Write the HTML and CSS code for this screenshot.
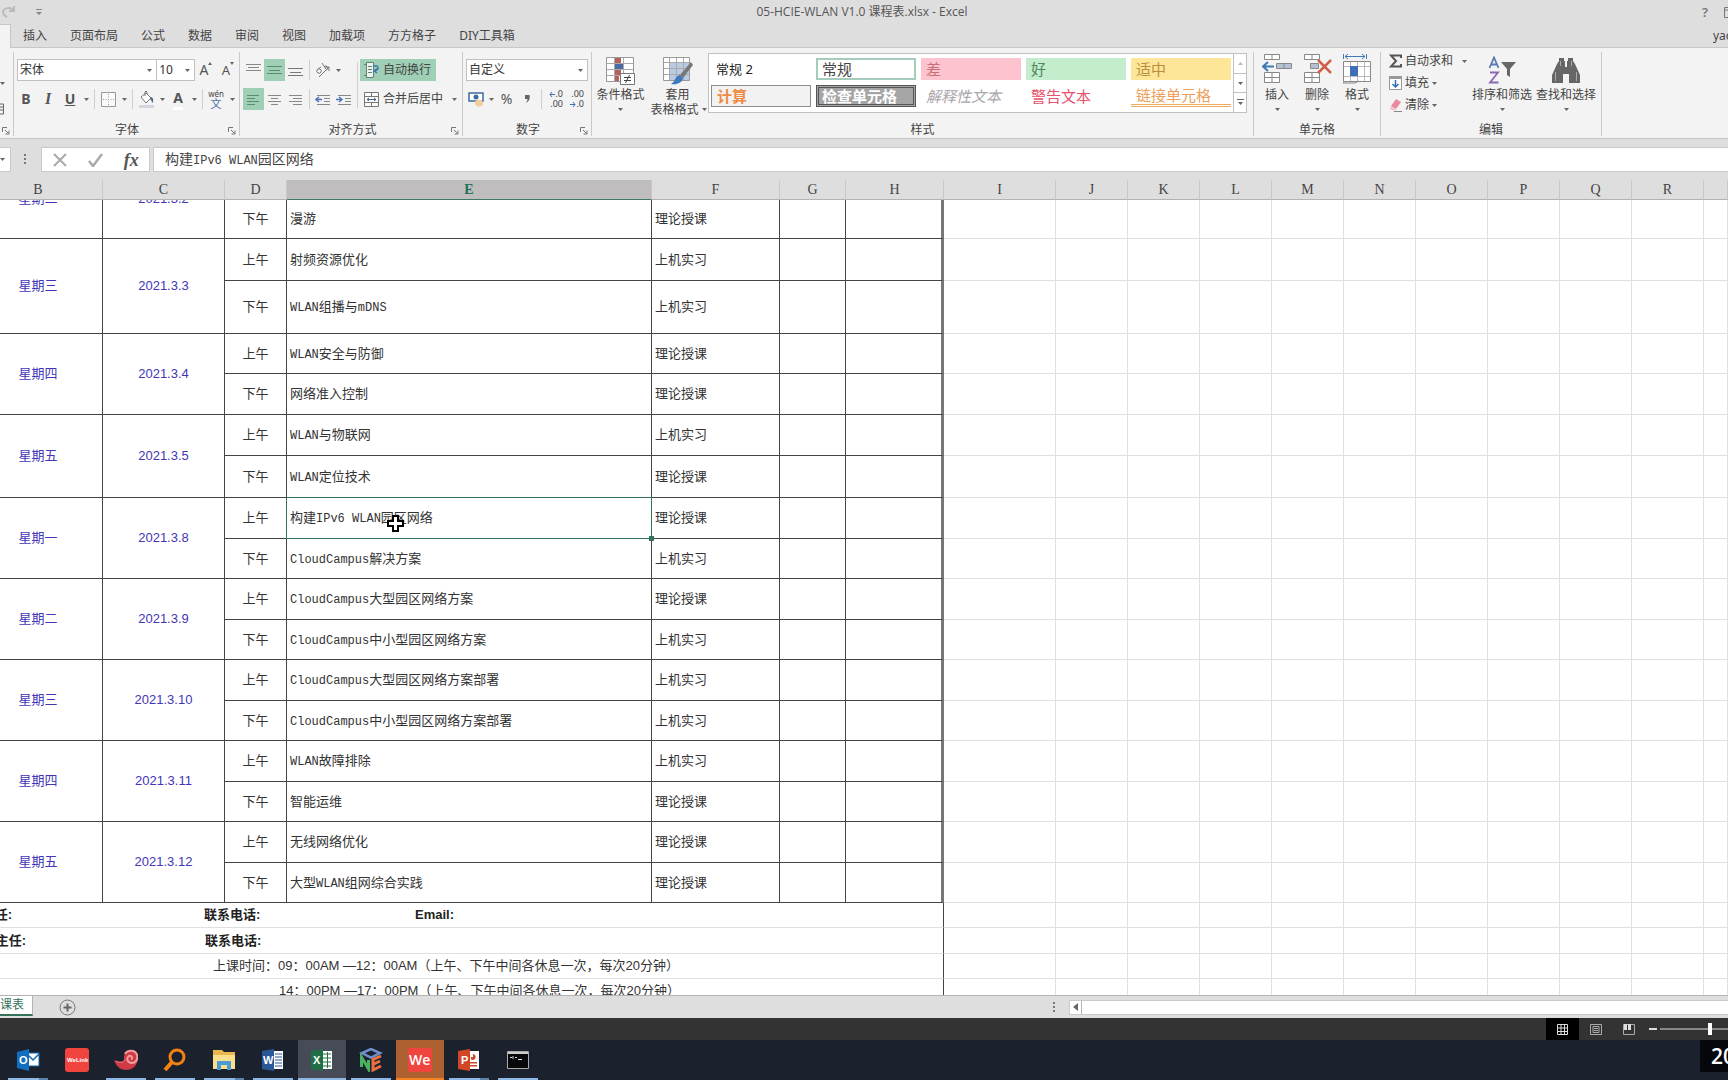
FILE: index.html
```html
<!DOCTYPE html>
<html lang="zh-CN">
<head>
<meta charset="utf-8">
<title>05-HCIE-WLAN V1.0 课程表.xlsx - Excel</title>
<link rel="stylesheet" href="styles.css">
</head>
<body>
<svg class="defs" aria-hidden="true">
  <symbol id="caret" viewBox="0 0 7 4"><path d="M0 0h7L3.500 4z"/></symbol>
  <symbol id="launch" viewBox="0 0 8 8"><path d="M.5 5V.5H5M3 3l3.500 3.500M7 3.500V7H3.500" fill="none" stroke="#777"/></symbol>
</svg>

<header class="titlebar">
  <div class="quick">
    <svg width="16" height="14" viewBox="0 0 16 14"><path d="M14 1v5H9M14 6C11 2 4 2 3 7c0 3 2 4 4 5" fill="none" stroke="#bdbabb" stroke-width="2"/></svg>
    <svg class="more" width="6" height="6" viewBox="0 0 6 6"><path d="M0 0h6v1H0zM0 3h6L3 6z" fill="#8a8788"/></svg>
  </div>
  <h1>05-HCIE-WLAN V1.0 课程表.xlsx - Excel</h1>
  <div class="winbtns"><span>?</span><svg width="4" height="11"><path d="M5 .5H.5v10H5M1 3h4" fill="none" stroke="#777"/></svg></div>
</header>

<nav class="tabs">
  <span class="tab-active"></span>
  <a href="#">插入</a><a href="#">页面布局</a><a href="#">公式</a><a href="#">数据</a><a href="#">审阅</a><a href="#">视图</a><a href="#">加载项</a><a href="#">方方格子</a><a href="#">DIY工具箱</a>
  <span class="user">yao</span>
</nav>

<section class="ribbon">
  <div class="group g-clip">
    <div class="clip-body">
      <svg class="caret" width="5" height="3"><use href="#caret"/></svg>
      <svg width="5" height="12"><path d="M0 1h3.500v10H0M0 4h3M0 7h3" fill="none" stroke="#666"/></svg>
    </div>
    <svg class="launch" width="8" height="8"><use href="#launch"/></svg>
  </div>

  <div class="group g-font">
    <div class="body">
      <div class="row fields">
        <span class="field w-font"><select aria-label="字体"><option>宋体</option></select><svg class="caret" width="5" height="3"><use href="#caret"/></svg></span>
        <span class="field w-size"><select aria-label="字号"><option>10</option></select><svg class="caret" width="5" height="3"><use href="#caret"/></svg></span>
        <button class="ib grow" aria-label="增大字号"><span class="letter">A</span><svg width="4" height="3"><path d="M0 3h4L2 0z"/></svg></button>
        <button class="ib grow" aria-label="减小字号"><span class="letter small">A</span><svg width="4" height="3"><path d="M0 0h4L2 3z"/></svg></button>
      </div>
      <div class="row">
        <button class="ib"><b class="letter">B</b></button>
        <button class="ib"><b class="letter serif"><i>I</i></b></button>
        <button class="ib"><b class="letter"><u>U</u></b></button>
        <button class="cb" aria-label="下划线选项"><svg class="caret" width="5" height="3"><use href="#caret"/></svg></button>
        <span class="sep"></span>
        <button class="ib" aria-label="边框"><svg width="15" height="15"><path d="M.5 .5h14v14H.5z" fill="#fafafa" stroke="#999"/><path d="M7.500 2v11M2 7.500h11" stroke="#999" stroke-dasharray="1 1.500"/></svg></button>
        <button class="cb" aria-label="边框选项"><svg class="caret" width="5" height="3"><use href="#caret"/></svg></button>
        <span class="sep"></span>
        <button class="ib" aria-label="填充颜色"><svg width="17" height="18"><path d="M3 7l5-4 5 5-5 5z" fill="#fff" stroke="#777"/><path d="M7 6V2q1-2 2 0v2" fill="none" stroke="#777"/><path d="M13 7c3 1 2 3 2 6-2-1-1-3-3-4z" fill="#56657f"/><path d="M1 15h15v3H1z" fill="#d4d5de"/></svg></button>
        <button class="cb" aria-label="填充选项"><svg class="caret" width="5" height="3"><use href="#caret"/></svg></button>
        <button class="ib" aria-label="字体颜色"><b class="letter under">A</b></button>
        <button class="cb" aria-label="字体颜色选项"><svg class="caret" width="5" height="3"><use href="#caret"/></svg></button>
        <span class="sep"></span>
        <button class="ib pinyin" aria-label="拼音"><span>wén</span><span class="zh">文</span></button>
        <button class="cb" aria-label="拼音选项"><svg class="caret" width="5" height="3"><use href="#caret"/></svg></button>
      </div>
    </div>
    <div class="label">字体</div><svg class="launch" width="8" height="8"><use href="#launch"/></svg>
  </div>

  <div class="group g-align">
    <div class="body split">
      <div class="left">
        <div class="row">
          <button class="ib" aria-label="顶端对齐"><svg width="15" height="18"><path d="M0 3.500h15M2 6.500h11M0 9.500h15" stroke="#888"/></svg></button>
          <button class="ib on" aria-label="垂直居中"><svg width="15" height="14"><path d="M0 3.500h15M2 7.500h11M0 10.500h15" stroke="#5d8a75"/></svg></button>
          <button class="ib" aria-label="底端对齐"><svg width="15" height="14"><path d="M0 5.500h15M2 9.500h11M0 12.500h15" stroke="#777"/></svg></button>
          <span class="sep"></span>
          <button class="ib" aria-label="方向"><svg width="16" height="16"><path d="M2 8a2 2 0 1 1 4 2 2 2 0 1 1-4-2l4-3M7 1l4 6M9 5a2 2 0 1 1 2 3M4 15L14 5M14 9V5h-4" fill="none" stroke="#777"/></svg></button>
          <button class="cb" aria-label="方向选项"><svg class="caret" width="5" height="3"><use href="#caret"/></svg></button>
        </div>
        <div class="row">
          <button class="ib on" aria-label="左对齐"><svg width="13" height="13"><path d="M0 2.500h12M0 5.500h8M0 8.500h12M0 11.500h8" stroke="#5d8a75"/></svg></button>
          <button class="ib" aria-label="居中"><svg width="13" height="13"><path d="M0 2.500h13M3 5.500h7M0 8.500h13M3 11.500h7" stroke="#888"/></svg></button>
          <button class="ib" aria-label="右对齐"><svg width="13" height="13"><path d="M0 2.500h13M4 5.500h9M0 8.500h13M4 11.500h9" stroke="#888"/></svg></button>
          <span class="sep"></span>
          <button class="ib" aria-label="减少缩进"><svg width="15" height="13"><path d="M2 2.500h13M9 5.500h6M9 8.500h6M2 11.500h13" stroke="#888"/><path d="M7 6.500H1M4 4L1 6.500 4 9" stroke="#4d74b5" stroke-width="1.500" fill="none"/></svg></button>
          <button class="ib" aria-label="增加缩进"><svg width="15" height="13"><path d="M2 2.500h13M9 5.500h6M9 8.500h6M2 11.500h13" stroke="#888"/><path d="M0 6.500h6M3 4l3 2.500L3 9" stroke="#4d74b5" stroke-width="1.500" fill="none"/></svg></button>
        </div>
      </div>
      <span class="sep tall"></span>
      <div class="right">
        <button class="tb on"><svg width="17" height="18"><path d="M3.500 1.500h7v15h-7zM5 5.500h4M5 8.500h4M5 11.500h4M1 14.500h2M1 3.500h2" fill="#eaf4ee" stroke="#6b7d75"/><path d="M10 5h4q3 3-2 5M14 7.500L11 10l3 2" fill="none" stroke="#3f78ae" stroke-width="1.500"/></svg>自动换行</button>
        <button class="tb"><svg width="17" height="17"><path d="M1.500 1.500h14v14h-14zM1.500 5.500h14M1.500 11.500h14M8.500 1v4M8.500 12v4" fill="#fafafa" stroke="#777"/><path d="M4 8.500h9M6 7L4 8.500 6 10M11 7l2 1.500L11 10" fill="none" stroke="#49698f"/></svg>合并后居中<svg class="caret far" width="5" height="3"><use href="#caret"/></svg></button>
      </div>
    </div>
    <div class="label">对齐方式</div><svg class="launch" width="8" height="8"><use href="#launch"/></svg>
  </div>

  <div class="group g-number">
    <div class="body">
      <div class="row fields">
        <span class="field w-num"><select aria-label="数字格式"><option>自定义</option></select><svg class="caret" width="5" height="3"><use href="#caret"/></svg></span>
      </div>
      <div class="row">
        <button class="ib" aria-label="会计格式"><svg width="16" height="16"><path d="M1 2h14v8H1z" fill="#fff" stroke="#3e6aa5" stroke-width="1.500"/><circle cx="8" cy="6" r="2.500" fill="#3e6aa5"/><ellipse cx="11" cy="12" rx="4" ry="3.500" fill="#f1cf9d"/></svg></button>
        <button class="cb" aria-label="会计格式选项"><svg class="caret" width="5" height="3"><use href="#caret"/></svg></button>
        <button class="ib"><span class="letter pct">%</span></button>
        <button class="ib" aria-label="千位分隔"><svg width="7" height="10"><path d="M1 1h4.500c1 4-1 7-4 8 1-1 2-2 2-4H1z" fill="#666"/></svg></button>
        <span class="sep"></span>
        <button class="ib dec" aria-label="增加小数位数"><span class="up"><svg width="6" height="5"><path d="M6 2.500H1M3 0L1 2.500 3 5" fill="none" stroke="#3f6fb5"/></svg>.0</span><span>.00</span></button>
        <button class="ib dec" aria-label="减少小数位数"><span>.00</span><span class="up"><svg width="6" height="5"><path d="M0 2.500h5M3 0l2 2.500L3 5" fill="none" stroke="#3f6fb5"/></svg>.0</span></button>
      </div>
    </div>
    <div class="label">数字</div><svg class="launch" width="8" height="8"><use href="#launch"/></svg>
  </div>

  <div class="group g-style">
    <div class="body split">
      <button class="big">
        <svg width="29" height="29"><path d="M.5 1.500h27v24H.5z" fill="#fff" stroke="#999"/><path d="M1 7.500h26M1 13.500h26M1 19.500h26M8.500 2v23M17.500 2v23" stroke="#aaa"/><path d="M9 2h6v5H9zM9 14h6v5H9zM9 20h4v5H9z" fill="#b5605a"/><path d="M9 8h8v5H9z" fill="#4b6ca5"/><path d="M14.500 17.500h14v11h-14z" fill="#fff" stroke="#777"/><path d="M18 21.500h7M18 24.500h7M23.500 19L19.500 27" stroke="#444"/></svg>
        <span>条件格式</span><svg class="caret" width="5" height="3"><use href="#caret"/></svg>
      </button>
      <button class="big">
        <svg width="31" height="29"><path d="M1.500 1.500h26v23h-26z" fill="#fff" stroke="#999"/><path d="M8 7h19v17H8z" fill="#b9cae2"/><path d="M2 6.500h25M2 12.500h25M2 18.500h25M7.500 2v22M14.500 2v22M21.500 2v22" stroke="#aaa"/><path d="M29 6L31 9 21 22l-3-3z" fill="#777"/><path d="M18 19l3 3c-1 5-6 7-12 6 4-2 4-8 9-9z" fill="#3f78bb"/></svg>
        <span>套用</span><span class="line2">表格格式<svg class="caret" width="5" height="3"><use href="#caret"/></svg></span>
      </button>
      <div class="gallery">
        <div class="swatches">
          <button class="sw sw-n2">常规 2</button><button class="sw sw-normal">常规</button><button class="sw sw-bad">差</button><button class="sw sw-good">好</button><button class="sw sw-mid">适中</button>
          <button class="sw sw-calc">计算</button><button class="sw sw-check">检查单元格</button><button class="sw sw-note">解释性文本</button><button class="sw sw-warn">警告文本</button><button class="sw sw-link">链接单元格</button>
        </div>
        <div class="steps">
          <button aria-label="上一行"><svg width="5" height="3"><path d="M0 3h5L2.500 0z" fill="#bbb"/></svg></button>
          <button aria-label="下一行"><svg class="caret" width="5" height="3"><use href="#caret"/></svg></button>
          <button aria-label="更多"><svg width="7" height="7"><path d="M0 0h7v1H0zM1 3h5L3.500 6z" fill="#666"/></svg></button>
        </div>
      </div>
    </div>
    <div class="label">样式</div>
  </div>

  <div class="group g-cells">
    <div class="body split">
      <button class="big mid">
        <svg width="30" height="30"><path d="M2.500 .5h15v5h-15zM10 1v4M2.500 18.500h15v10h-15zM3 23.500h14M10 19v9" fill="#fff" stroke="#888"/><path d="M14.500 9.500h15v5h-15zM22 10v4" fill="#b4c0d4" stroke="#888"/><path d="M12 12.500H2M6 8l-5 4.500L6 17" fill="none" stroke="#3f78b5" stroke-width="2"/></svg>
        <span>插入</span><svg class="caret" width="5" height="3"><use href="#caret"/></svg>
      </button>
      <button class="big mid">
        <svg width="30" height="30"><path d="M2.500 .5h15v5h-15zM10 1v4M2.500 18.500h15v10h-15zM3 23.500h14M10 19v9" fill="#fff" stroke="#888"/><path d="M8.500 9.500h8v5h-8z" fill="#b4c0d4" stroke="#888"/><path d="M16 6l13 13M29 6L16 19" stroke="#cf5f4a" stroke-width="2.500"/></svg>
        <span>删除</span><svg class="caret" width="5" height="3"><use href="#caret"/></svg>
      </button>
      <button class="big mid">
        <svg width="30" height="30"><path d="M3 2.500h20M6 0L3 2.500 6 5M20 0l3 2.500L20 5M1.500 0v5M24.500 0v5" fill="none" stroke="#3f78b5"/><path d="M1.500 7.500h27v20h-27z" fill="#fff" stroke="#888"/><path d="M2 12.500h26M2 22.500h26M8.500 8v19M15.500 8v19M22.500 8v19" stroke="#bbb"/><path d="M8 12h8v10H8z" fill="#3f6fb5"/><path d="M3 27l-2 2h12l4-2" fill="none" stroke="#888"/></svg>
        <span>格式</span><svg class="caret" width="5" height="3"><use href="#caret"/></svg>
      </button>
    </div>
    <div class="label">单元格</div>
  </div>

  <div class="group g-edit">
    <div class="body split">
      <div class="stack">
        <button class="tb"><svg width="13" height="14"><path d="M12 4V1.500H2L7 7l-5 5.500h10V10" fill="none" stroke="#555" stroke-width="2"/></svg>自动求和<svg class="caret far" width="5" height="3"><use href="#caret"/></svg></button>
        <button class="tb"><svg width="13" height="14"><path d="M.5 .5h12v13H.5z" fill="#fff" stroke="#999"/><path d="M0 0h13v3H0z" fill="#999"/><path d="M6.500 4v7M3.500 8l3 3 3-3" fill="none" stroke="#2f6fb0" stroke-width="1.500"/></svg>填充<svg class="caret" width="5" height="3"><use href="#caret"/></svg></button>
        <button class="tb"><svg width="13" height="14"><path d="M7 1l5 3-5 7-5-3z" fill="#e8899f"/><path d="M2 8l5 3-2 2-4-2z" fill="#f3c3cd"/><path d="M5 13.500h8" stroke="#888"/></svg>清除<svg class="caret" width="5" height="3"><use href="#caret"/></svg></button>
      </div>
      <button class="big wide">
        <svg width="28" height="28"><path d="M1.500 12L6 1.500 10.500 12M3 8.500h6" fill="none" stroke="#5b7bb4" stroke-width="1.800"/><path d="M2 16.500h8L2 26.500h8.500" fill="none" stroke="#8a68ad" stroke-width="1.800"/><path d="M13 6h15l-6 7v8l-3-2v-6z" fill="#666"/></svg>
        <span>排序和筛选</span><svg class="caret" width="5" height="3"><use href="#caret"/></svg>
      </button>
      <button class="big wide">
        <svg width="28" height="28"><path d="M7 2h5v3h1v6h2V5h1V2h5v3l2 3 5 11v8H17v-9h-6v9H0v-8L5 8l2-3z" fill="#666"/><path d="M3.500 16v9M24.500 16v9M8.500 5v5M19.500 5v5" stroke="#aaa"/></svg>
        <span>查找和选择</span><svg class="caret" width="5" height="3"><use href="#caret"/></svg>
      </button>
    </div>
    <div class="label">编辑</div>
  </div>
</section>

<section class="formula">
  <button class="namebox" aria-label="名称框"><svg class="caret" width="5" height="3"><use href="#caret"/></svg></button>
  <span class="grip"></span>
  <div class="fbtns">
    <button aria-label="取消"><svg width="14" height="14"><path d="M1 1l12 12M13 1L1 13" stroke="#aaa" stroke-width="2"/></svg></button>
    <button aria-label="输入"><svg width="15" height="14"><path d="M1 8l4 5L14 1" fill="none" stroke="#aaa" stroke-width="2.500"/></svg></button>
    <button class="fx">fx</button>
  </div>
  <div class="fval" role="textbox" aria-label="编辑栏">构建<span class="lat">IPv6 WLAN</span>园区网络</div>
</section>

<div class="headwrap"><table class="sheet head" aria-label="列标题"></table></div>
<main class="viewport"><table class="sheet cells" aria-label="课程表"></table></main>

<div class="sheetbar">
  <a class="sheettab" href="#">课表</a>
  <button class="add" aria-label="新工作表"><svg width="17" height="17"><circle cx="8.500" cy="8.500" r="7.500" fill="none" stroke="#777"/><path d="M8.500 4.500v8M4.500 8.500h8" stroke="#666" stroke-width="2"/></svg></button>
  <span class="grip"></span>
  <div class="hscroll"><button aria-label="向左滚动"><svg width="5" height="8"><path d="M5 0v8L0 4z" fill="#666"/></svg></button><span class="thumb"></span></div>
</div>

<footer class="status">
  <button class="view on" aria-label="普通"><svg width="11" height="11"><path d="M.5 .5h10v10H.5zM4 0v11M7.500 0v11M0 4h11M0 7.500h11" fill="none" stroke="#ddd"/></svg></button>
  <button class="view" aria-label="页面布局视图"><svg width="12" height="11"><path d="M.5 .5h11v10H.5zM3 2.500h6v6H3zM4 4.500h4M4 6.500h4" fill="none" stroke="#aaa"/></svg></button>
  <button class="view" aria-label="分页预览"><svg width="12" height="11"><path d="M.5 .5h11v10H.5z" fill="none" stroke="#aaa"/><path d="M1 0h3v6H1zM5 0h3v6H5z" fill="#ddd"/></svg></button>
  <span class="minus"></span>
  <input class="zoom" type="range" aria-label="缩放" value="50">
</footer>

<div class="taskbar">
  <button class="app two" aria-label="Outlook"><svg width="24" height="24"><path d="M11 5h12v13H11z" fill="#fff" stroke="#0d6ab5"/><path d="M12 7l5 5 6-6" fill="none" stroke="#0d6ab5" stroke-width="1.500"/><path d="M1 4l12-3v22L1 20z" fill="#0f6fbe"/><text x="3" y="16" class="mark">O</text></svg></button>
  <button class="app none" aria-label="WeLink"><svg width="24" height="24"><rect width="24" height="24" rx="3" fill="#f0453f"/><text x="2" y="14" class="tiny">WeLink</text></svg></button>
  <button class="app" aria-label="eSight"><svg width="24" height="22"><path d="M0 11c4 2 8 2 10 0-1-6 3-10 8-10 4 0 6 3 6 7 0 8-5 13-12 13C6 21 2 17 0 11z" fill="#cf3a46"/><path d="M11 5c2-4 10-5 12 1 1 4-1 8-5 8-5 0-6-5-3-7 3-1 4 3 2 3" fill="none" stroke="#f0a09c" stroke-width="2"/><path d="M2 12c5 3 9 1 9-2" fill="none" stroke="#ea7c7c"/></svg></button>
  <button class="app" aria-label="Everything"><svg width="24" height="24"><circle cx="14" cy="9" r="7" fill="none" stroke="#f28211" stroke-width="3"/><path d="M9 14l-7 8" stroke="#f28211" stroke-width="4"/></svg></button>
  <button class="app two" aria-label="文件资源管理器"><svg width="24" height="24"><path d="M1 2h9l2 2h11v17H1z" fill="#e9b84c"/><path d="M1 7h22v14H1z" fill="#fbe08c"/><path d="M5 13h14v9h-4v-5H9v5H5z" fill="#4a9ad8"/></svg></button>
  <button class="app" aria-label="Word"><svg width="24" height="24"><path d="M12 3h10v18H12z" fill="#fff"/><path d="M14 6h7M14 9h7M14 12h7M14 15h7M14 18h7" stroke="#2b579a"/><path d="M1 3l12-2v22L1 21z" fill="#2b579a"/><text x="2" y="16" class="mark">W</text></svg></button>
  <button class="app active" aria-label="Excel"><svg width="24" height="24"><path d="M12 3h10v18H12z" fill="#fff"/><path d="M13 6h8M13 10h8M13 14h8M13 18h8M17.500 4v16" stroke="#1f7145"/><path d="M1 3l12-2v22L1 21z" fill="#1f7145"/><text x="3" y="16" class="mark">X</text></svg></button>
  <button class="app" aria-label="eNSP"><svg width="24" height="24"><path d="M12 1l9 4-9 4.500L3 5z" fill="none" stroke="#6f8fce" stroke-width="2.500"/><path d="M2.500 19V9l7 12V12" fill="none" stroke="#49b261" stroke-width="3"/><path d="M22 8l-8 3.500V22l8-4M14 16.500l7-3.500" fill="none" stroke="#ea7040" stroke-width="3"/></svg></button>
  <button class="app orange" aria-label="WeLink 会议"><svg width="24" height="24"><rect width="24" height="24" rx="2" fill="#f0453f"/><text x="1" y="17" class="we">We</text></svg></button>
  <button class="app two" aria-label="PowerPoint"><svg width="24" height="24"><path d="M12 3h10v18H12z" fill="#fff"/><path d="M13 14h7v1.500h-7zM13 17h7v1.500h-7z" fill="#d04727"/><path d="M16 6a3 3 0 1 1-2 5.500V9h2z" fill="#d04727"/><path d="M1 3l12-2v22L1 21z" fill="#d04727"/><text x="4" y="16" class="mark">P</text></svg></button>
  <button class="app" aria-label="命令提示符"><svg width="22" height="18"><path d="M.5 .5h21v17H.5z" fill="#08090b" stroke="#aaa"/><path d="M1 1h20v2H1z" fill="#ccc"/><path d="M3 6.500h2M6 5v3M8 6.500h2M11 8.500h4" stroke="#ddd"/></svg></button>
  <div class="clock">20</div>
</div>
<script src="sheet.js"></script>
</body>
</html>
```

FILE: styles.css
```css
* { box-sizing: border-box; }
html, body { height: 100%; }
body {
  margin: 0;
  display: flex;
  flex-direction: column;
  overflow: hidden;
  background: #dfdedf;
  color: #444;
  font: 12px/16px "Noto Sans", "Noto Sans CJK SC", sans-serif;
}
button, select { font: inherit; color: inherit; border: 0; padding: 0; margin: 0; background: none; }
button { display: flex; align-items: center; justify-content: center; }
a { color: inherit; text-decoration: none; }
svg { display: block; flex: none; }
.defs { position: absolute; width: 0; height: 0; }
.caret { fill: #666; }

.titlebar { display: flex; align-items: center; height: 24px; flex: none; }
.quick { display: flex; align-items: center; gap: 20px; width: 200px; }
.titlebar h1 { flex: 1; margin: 0; padding-right: 4px; text-align: center; font: 400 12px/16px "Open Sans", "Noto Sans CJK SC", sans-serif; color: #555; }
.winbtns { display: flex; align-items: center; justify-content: flex-end; gap: 16px; width: 200px; font-size: 13px; font-weight: 600; color: #777; }

.tabs { display: flex; align-items: center; gap: 23px; height: 24px; flex: none; border-bottom: 1px solid #c8c7c8; white-space: nowrap; }
.tab-active { width: 11px; height: 24px; margin-right: -11px; background: #f3f3f3; border: 1px solid #c8c7c8; border-width: 1px 1px 0 0; }
.user { margin-left: auto; width: 15px; overflow: hidden; }

.ribbon { display: flex; height: 91px; flex: none; padding-top: 4px; background: #f3f3f3; border-bottom: 1px solid #c8c7c8; white-space: nowrap; }
.group { position: relative; flex: none; display: flex; flex-direction: column; height: 84px; border-right: 1px solid #c9c9c9; }
.g-clip { width: 14px; }
.clip-body { padding-top: 30px; display: grid; gap: 18px; }
.g-font { width: 226px; padding-left: 1px; }
.g-align { width: 223px; padding-left: 3px; }
.g-number { width: 129px; padding-left: 2px; }
.g-style { width: 662px; }
.g-cells { width: 127px; }
.g-edit { width: 221px; }
.label { height: 16px; margin-bottom: -2px; text-align: center; }
.launch { position: absolute; right: 3px; bottom: 1px; }
.body { flex: 1; display: flex; flex-direction: column; gap: 7px; padding-top: 7px; }
.body.split { flex-direction: row; gap: 0; }
.row { display: flex; align-items: center; height: 22px; }
.left { display: flex; flex-direction: column; gap: 7px; width: 112px; }
.left .ib { width: 21px; }
.right { display: flex; flex-direction: column; align-items: flex-start; gap: 7px; }
.ib { width: 22px; height: 22px; flex: none; }
.g-number .ib { width: 21px; }
.cb { width: 10px; height: 22px; flex: none; }
.on { background: #9fcfb5; }
.sep { width: 1px; height: 20px; margin: 0 2px 0 3px; background: #cfcfcf; flex: none; }
.sep.tall { height: 46px; margin-top: 3px; }
.tb { height: 22px; padding: 0 5px 0 3px; gap: 3px; }
.tb .far { margin-left: 6px; }
.letter { font-size: 14px; line-height: 18px; color: #555; }
.letter.serif { font-family: "Liberation Serif", serif; font-size: 16px; }
.letter.small { font-size: 13px; }
.letter.under { border-bottom: 3px solid #fff; }
.grow { align-items: center; }
.grow svg { align-self: flex-start; margin-top: 3px; fill: #666; }
.pinyin { flex-direction: column; font-size: 8px; line-height: 9px; }
.pinyin .zh { font-size: 11px; line-height: 12px; color: #4f6da6; }
.dec { flex-direction: column; align-items: flex-end; padding-right: 2px; font-size: 9px; line-height: 10px; }
.dec .up { display: flex; align-items: center; }

.field { position: relative; display: flex; height: 22px; background: #fff; border: 1px solid #c0c0c0; }
.field + .field { border-left: 0; }
.field select { appearance: none; width: 100%; padding-left: 2px; color: #333; }
.field .caret { position: absolute; right: 4px; top: 9px; }
.g-font .fields { padding-left: 2px; }
.g-number .fields { padding-left: 1px; }
.w-font { width: 141px; }
.w-size { width: 38px; }
.w-num { width: 122px; }

.big { flex-direction: column; justify-content: flex-start; width: 57px; height: 64px; margin-top: -3px; }
.big > svg:first-child { height: 31px; }
.big > span { height: 15px; line-height: 15px; }
.big > .caret { margin-top: 6px; }
.big .line2 { display: flex; align-items: center; gap: 3px; padding-left: 2px; }
.big.mid { width: 40px; margin-top: -5px; }
.big.mid > svg:first-child { height: 33px; }
.g-cells .body { padding-left: 3px; }
.big.wide { width: 64px; }
.stack { display: flex; flex-direction: column; align-items: flex-start; width: 88px; margin-top: -9px; padding-left: 6px; }
.g-edit .body { padding-left: 1px; }
.stack .tb { padding-left: 1px; }

.gallery { display: flex; width: 539px; height: 60px; margin: -6px 0 0 2px; background: #fff; border: 1px solid #c0c0c0; }
.swatches { flex: 1; display: grid; grid-template-columns: repeat(5, 100px); grid-template-rows: 22px 22px; gap: 5px; padding: 4px 2px; }
.sw { justify-content: flex-start; padding-left: 5px; font-size: 15px; }
.sw-n2 { font-size: 13px; color: #222; }
.sw-normal { border: 2px solid #a5cdbc; padding-left: 4px; color: #444; }
.sw-bad { background: #fdc3cf; color: #c7707a; }
.sw-good { background: #c3edcc; color: #4f8560; }
.sw-mid { background: #fee699; color: #b98e3e; }
.sw-calc { background: #f2f2f2; border: 1px solid #8d8d8d; color: #ef8b42; font-weight: 700; }
.sw-check { background: #a5a5a5; border: 3px double #555; padding-left: 3px; color: #fff; font-weight: 700; }
.sw-note { color: #aaa5ac; font-style: italic; }
.sw-warn { color: #e8506a; }
.sw-link { color: #ec9f5c; border-bottom: 3px double #eda95c; }
.steps { display: flex; flex-direction: column; width: 14px; border-left: 1px solid #c0c0c0; }
.steps button { flex: 1; border-bottom: 1px solid #c0c0c0; }
.steps button:last-child { border-bottom: 0; }

.formula { display: flex; align-items: center; height: 25px; margin-top: 8px; flex: none; }
.namebox { width: 11px; height: 25px; justify-content: flex-start; background: #fff; border: 1px solid #cbcacb; border-left: 0; }
.grip { width: 2px; height: 11px; background: repeating-linear-gradient(#777 0 2px, transparent 2px 4px); }
.formula .grip { margin: 0 15px 0 13px; }
.fbtns { display: flex; width: 109px; height: 25px; background: #fff; border: 1px solid #cbcacb; }
.fbtns button { flex: 1; }
.fbtns .fx { font: italic 700 18px/20px "Liberation Serif", serif; color: #555; }
.fval { flex: 1; height: 25px; margin-left: 3px; padding-left: 11px; background: #fff; border: 1px solid #cbcacb; border-right: 0; font: 14px/21px "Noto Sans CJK SC", sans-serif; }
.fval .lat { font: 12px/20px "Liberation Mono", monospace; }

.headwrap { padding-top: 8px; flex: none; }
.sheet { width: 100%; table-layout: fixed; border-collapse: separate; border-spacing: 0; }
.sheet th, .sheet td { padding: 0; overflow: hidden; white-space: nowrap; }
.head th { height: 20px; padding-top: 1px; border-right: 1px solid #c9c8c9; border-bottom: 1px solid #b4b3b4; font: 14px/18px "Liberation Serif", serif; color: #444; }
.head th.cur { background: #bfbdbe; border-bottom-color: #3c7a62; color: #22705a; font-weight: 700; }
.head .cb-b, .cells .cb-b { padding-right: 26px; }

.viewport { flex: 1; min-height: 0; overflow: hidden; background: #fff; }
.cells { margin-top: -41px; }
.cells td { border-right: 1px solid #444; border-bottom: 1px solid #444; text-align: center; color: #333; font: 13px/18px "Liberation Sans", "Noto Sans CJK SC", sans-serif; }
.cells td.left-text { text-align: left; padding-left: 3px; }
.cells td.day { color: #4335b8; }
.cells td.edge { border-right: 3px solid #777; }
.cells td.blank { border-color: #e0dfe2; }
.cells .lat { font: 12px/16px "Liberation Mono", monospace; }
.cells td.selected { position: relative; z-index: 1; overflow: visible; border-color: #35725b; box-shadow: 0 -1px #35725b, -1px 0 #35725b; }
.handle { position: absolute; right: -3px; bottom: -3px; width: 5px; height: 5px; background: #35725b; }
.pointer { position: absolute; left: 100px; top: 17px; }
.cells td.note { text-align: left; border-bottom-color: #e0dfe2; }
.note div { display: flex; }
.cells td.strong { font-weight: 700; color: #222; }
.note .cut { display: flex; justify-content: flex-end; overflow: hidden; width: 12px; margin-right: 192px; }
.note .cut.long { width: 26px; margin-right: 179px; }
.note .phone { width: 211px; }
.note .hours { padding-left: 213px; }
.note .hours.second { padding-left: 279px; }

.sheetbar { display: flex; align-items: center; height: 23px; flex: none; border-top: 1px solid #b4b3b4; background: #dfdedf; }
.sheettab { align-self: flex-start; width: 33px; height: 20px; line-height: 17px; background: #fff; border-right: 1px solid #b4b3b4; border-bottom: 2px solid #35725b; color: #35725b; }
.add { margin-left: 26px; }
.sheetbar .grip { margin-left: auto; }
.hscroll { display: flex; width: 38%; max-width: 659px; height: 15px; margin-left: 14px; background: #fff; border: 1px solid #cbcacb; border-right: 0; }
.hscroll button { width: 12px; border-right: 1px solid #b4b3b4; }
.sheetbar .hscroll { margin-right: 0; flex: 0 0 659px; }

.status { display: flex; align-items: center; justify-content: flex-end; height: 22px; flex: none; background: #333; }
.view { width: 33px; height: 22px; }
.view.on { background: #000; }
.minus { width: 8px; height: 2px; margin: 0 3px 0 4px; background: #ddd; }
.zoom { appearance: none; width: 100px; height: 2px; margin: 0 -32px 0 0; background: #888; }
.zoom::-webkit-slider-thumb { appearance: none; width: 4px; height: 12px; background: #fff; }

.taskbar { display: flex; gap: 1px; height: 40px; flex: none; padding-left: 4px; background: #1c212e; }
.app { width: 48px; height: 40px; background: linear-gradient(#8db8e6, #8db8e6) center bottom / 40px 2px no-repeat; }
.app.two { background-image: linear-gradient(90deg, #8db8e6 31px, #5c83aa 31px); }
.app.none { background: none; }
.app.active { background-color: #474b57; background-size: 48px 2px; }
.app.orange { background: linear-gradient(#f58220, #f58220) center bottom / 48px 2px no-repeat #ad6030; }
.mark { font: 700 11px "Liberation Sans", sans-serif; fill: #fff; }
.tiny { font: 700 6px "Liberation Sans", sans-serif; fill: #fff; }
.we { font: 600 14px "Open Sans", sans-serif; fill: #fff; }
.clock { width: 28px; height: 32px; margin-left: auto; padding-left: 11px; overflow: hidden; background: #05070c; color: #fff; font: 600 21px/32px "Open Sans", sans-serif; }
```

FILE: sheet.js
```js
const columns = [
  ['B', 103], ['C', 122], ['D', 62], ['E', 365], ['F', 128], ['G', 66], ['H', 98], ['I', 112],
  ['J', 72], ['K', 72], ['L', 72], ['M', 72], ['N', 72], ['O', 72], ['P', 72], ['Q', 72], ['R', 72], ['', 0]
];
const T = '理论授课', P = '上机实习';

// [weekday, date, [morning height, topic, kind], [afternoon height, topic, kind]]
const days = [
  ['星期二', '2021.3.2', [41, '', ''], [39, '漫游', T]],
  ['星期三', '2021.3.3', [42, '射频资源优化', P], [53, 'WLAN组播与mDNS', P]],
  ['星期四', '2021.3.4', [40, 'WLAN安全与防御', T], [41, '网络准入控制', T]],
  ['星期五', '2021.3.5', [41, 'WLAN与物联网', P], [42, 'WLAN定位技术', T]],
  ['星期一', '2021.3.8', [41, '构建IPv6 WLAN园区网络', T, true], [40, 'CloudCampus解决方案', P]],
  ['星期二', '2021.3.9', [41, 'CloudCampus大型园区网络方案', T], [40, 'CloudCampus中小型园区网络方案', P]],
  ['星期三', '2021.3.10', [41, 'CloudCampus大型园区网络方案部署', P], [40, 'CloudCampus中小型园区网络方案部署', P]],
  ['星期四', '2021.3.11', [41, 'WLAN故障排除', P], [40, '智能运维', T]],
  ['星期五', '2021.3.12', [41, '无线网络优化', T], [40, '大型WLAN组网综合实践', T]]
];
const notes = [
  [25, 'strong', '<div><span class="cut">任:</span><span class="phone">联系电话:</span><span>Email:</span></div>'],
  [26, 'strong', '<div><span class="cut long">主任:</span><span>联系电话:</span></div>'],
  [25, '', '<div class="hours">上课时间：09：00AM —12：00AM（上午、下午中间各休息一次，每次20分钟）</div>'],
  [25, '', '<div class="hours second">14：00PM —17：00PM（上午、下午中间各休息一次，每次20分钟）</div>']
];

const cols = '<colgroup>' + columns.map(c => c[1] ? `<col style="width:${c[1]}px">` : '<col>').join('') + '</colgroup>';
const blanks = '<td class="blank"></td>'.repeat(11);
const latin = s => s.replace(/[A-Za-z0-9]+( [A-Za-z0-9]+)*/g, m => `<span class="lat">${m}</span>`);
const overlay = '<span class="handle"></span><svg class="pointer" width="17" height="17"><path d="M6 1h5v5h5v5h-5v5H6v-5H1V6h5z" fill="#fff" stroke="#000" stroke-width="2"/></svg>';

document.querySelector('.head').innerHTML = cols + '<thead><tr>' +
  columns.map(c => `<th scope="col" class="${c[0] === 'E' ? 'cur' : c[0] === 'B' ? 'cb-b' : ''}">${c[0]}</th>`).join('') + '</tr></thead>';

let body = '';
for (const [week, date, ...halves] of days) {
  halves.forEach(([h, topic, kind, selected], i) => {
    body += `<tr style="height:${h}px">` +
      (i === 0 ? `<td rowspan="2" class="day cb-b">${week}</td><td rowspan="2" class="day">${date}</td>` : '') +
      `<td>${topic ? (i === 0 ? '上午' : '下午') : ''}</td>` +
      `<td class="left-text${selected ? ' selected' : ''}">${latin(topic)}${selected ? overlay : ''}</td>` +
      `<td class="left-text">${kind}</td><td></td><td class="edge"></td>${blanks}</tr>`;
  });
}
for (const [h, cls, html] of notes) {
  body += `<tr style="height:${h}px"><td colspan="7" class="note ${cls}">${html}</td>${blanks}</tr>`;
}
document.querySelector('.cells').innerHTML = cols + '<tbody>' + body + '</tbody>';
```
